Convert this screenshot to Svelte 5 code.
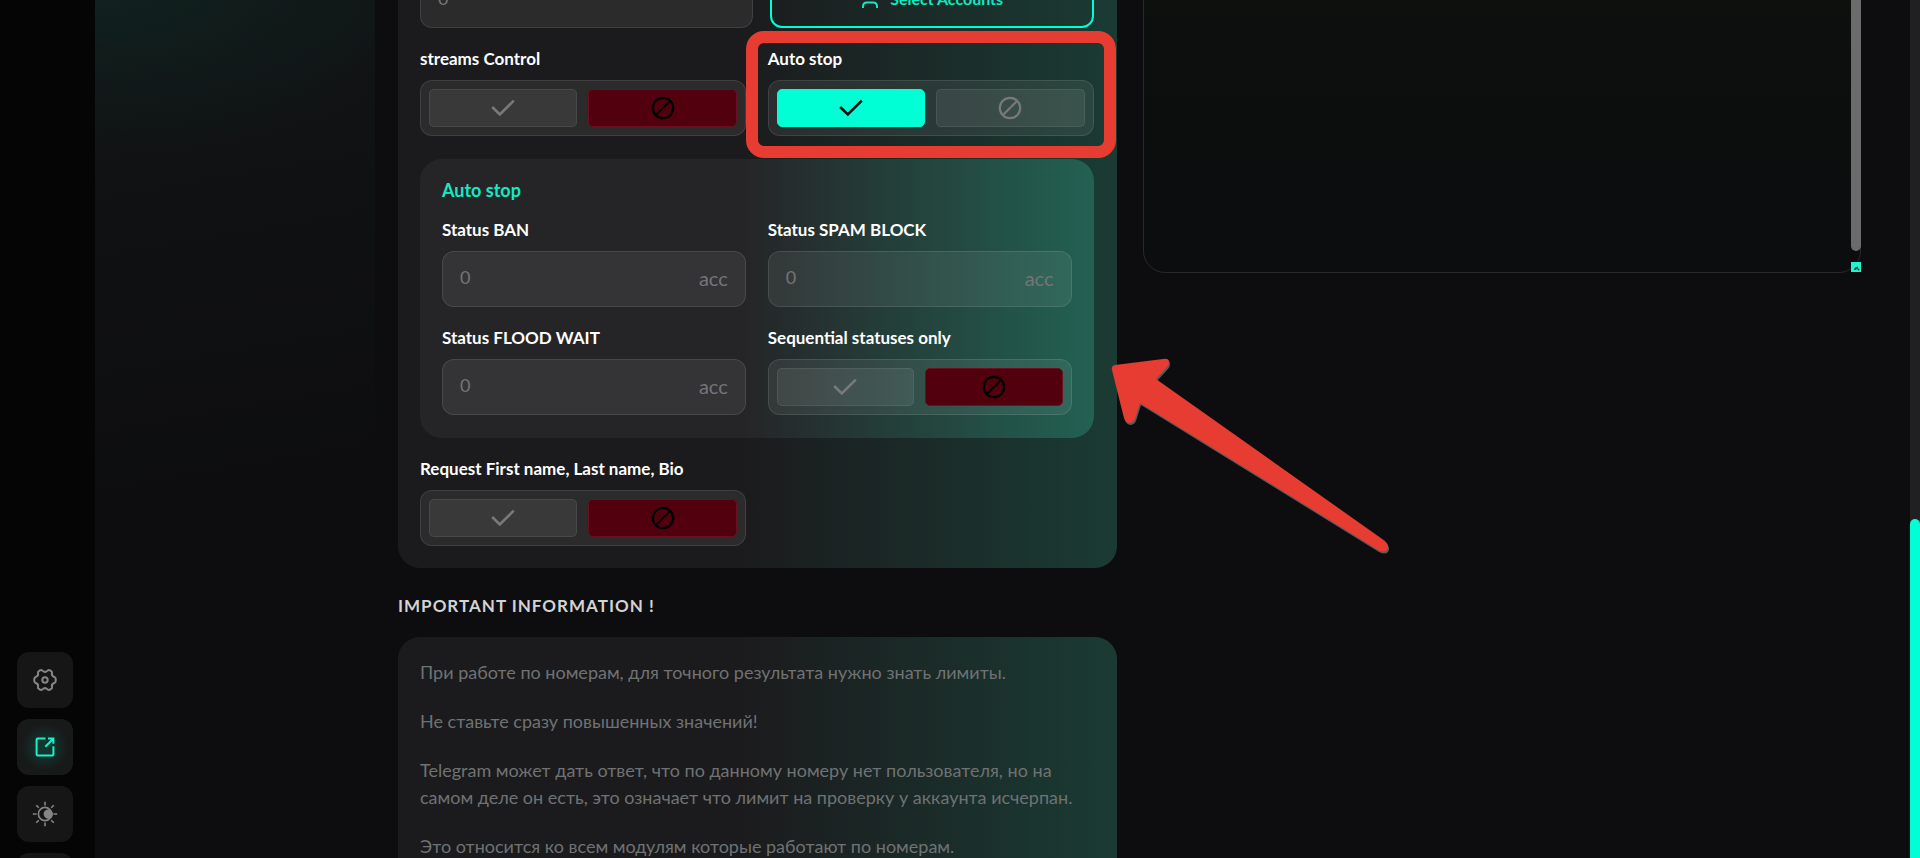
<script lang="ts">
	let streams = $state(false);
	let autoStop = $state(true);
	let sequential = $state(false);
	let requestBio = $state(false);
	let log = $state('');

	const info = [
		'При работе по номерам, для точного результата нужно знать лимиты.',
		'Не ставьте сразу повышенных значений!',
		'Telegram может дать ответ, что по данному номеру нет пользователя, но на самом деле он есть, это означает что лимит на проверку у аккаунта исчерпан.',
		'Это относится ко всем модулям которые работают по номерам.'
	];
</script>

{#snippet toggle(label: string, value: boolean, set: (v: boolean) => void)}
	<div class="toggle" role="group" aria-label={label}>
		<button
			type="button"
			class="toggle__btn"
			class:toggle__btn--on={value}
			aria-label="On"
			aria-pressed={value}
			onclick={() => set(true)}
		>
			<svg viewBox="0 0 24 24" width="24" height="24">
				<path d="M1.2 11 L8.8 18.4 L22.8 4.6" />
			</svg>
		</button>
		<button
			type="button"
			class="toggle__btn"
			class:toggle__btn--off={!value}
			aria-label="Off"
			aria-pressed={!value}
			onclick={() => set(false)}
		>
			<svg viewBox="0 0 24 24" width="24" height="24">
				<circle cx="12" cy="12" r="10.2" />
				<path d="M5.2 18.8 L18.8 5.2" />
			</svg>
		</button>
	</div>
{/snippet}

{#snippet amount(id: string, label: string)}
	<div class="field">
		<label class="field__label" for={id}>{label}</label>
		<div class="input">
			<input {id} type="text" inputmode="numeric" placeholder="0" />
			<span class="input__unit">acc</span>
		</div>
	</div>
{/snippet}

<div class="app">
	<nav class="sidebar">
		<button type="button" class="sidebar__btn" aria-label="Settings">
			<svg viewBox="0 0 24 24" width="24" height="24">
				<path
					d="M7.4 2.2 Q8.4 1.5 9.4 2.6 Q12 5.2 14.6 2.6 Q15.6 1.5 16.6 2.2 L18.4 3.3 Q19.3 3.9 19 5.1 Q18.3 7.8 20.8 8.7 Q22.7 9.4 22.7 10.7 L22.7 13.3 Q22.7 14.6 20.8 15.3 Q18.3 16.2 19 18.9 Q19.3 20.1 18.4 20.7 L16.6 21.8 Q15.6 22.5 14.6 21.4 Q12 18.8 9.4 21.4 Q8.4 22.5 7.4 21.8 L5.6 20.7 Q4.7 20.1 5 18.9 Q5.7 16.2 3.2 15.3 Q1.3 14.6 1.3 13.3 L1.3 10.7 Q1.3 9.4 3.2 8.7 Q5.7 7.8 5 5.1 Q4.7 3.9 5.6 3.3 Z"
				/>
				<circle cx="12" cy="12" r="2.7" />
			</svg>
		</button>
		<button type="button" class="sidebar__btn sidebar__btn--active" aria-label="Open">
			<svg viewBox="0 0 24 24" width="24" height="24">
				<path d="M12.5 3.6 H4.6 Q3.6 3.6 3.6 4.6 V19.4 Q3.6 20.4 4.6 20.4 H19.4 Q20.4 20.4 20.4 19.4 V11.2" />
				<path d="M12.3 11.8 L20 4 M15 3.6 H20.4 V8.8" />
			</svg>
		</button>
		<button type="button" class="sidebar__btn" aria-label="Theme">
			<svg class="sun" viewBox="0 0 26 26" width="26" height="26">
				<circle cx="13" cy="13" r="6.6" />
				<path class="solid" d="M15 8.6 A4.7 4.7 0 1 1 13.4 16.8 Q11.6 15.3 11.6 12.8 Q11.8 9.8 15 8.6 Z" />
				<path
					d="M13 0.8 V4.6 M13 21.4 V25.2 M0.8 13 H4.6 M21.4 13 H25.2 M4.2 4.2 L6.8 6.8 M19.2 19.2 L21.8 21.8 M4.2 21.8 L6.8 19.2 M19.2 6.8 L21.8 4.2"
				/>
			</svg>
		</button>
		<button type="button" class="sidebar__btn sidebar__btn--last" aria-label="More"></button>
	</nav>

	<main class="content">
		<div class="glow"></div>

		<section class="column">
			<form class="card">
				<div class="row row--accounts">
					<div class="input">
						<input type="text" inputmode="numeric" placeholder="0" aria-label="Count" />
					</div>
					<button type="button" class="select">
						<svg viewBox="0 0 20 20" width="20" height="20">
							<circle cx="10" cy="6" r="4" />
							<path d="M3 19 V17.5 Q3 13.5 7 13.5 H13 Q17 13.5 17 17.5 V19" />
						</svg>
						Select Accounts
					</button>
				</div>

				<div class="row">
					<div class="field">
						<span class="field__label">streams Control</span>
						{@render toggle('streams Control', streams, (v) => (streams = v))}
					</div>
					<div class="field field--marked">
						<span class="field__label">Auto stop</span>
						{@render toggle('Auto stop', autoStop, (v) => (autoStop = v))}
					</div>
				</div>

				<fieldset class="panel">
					<h3 class="panel__title">Auto stop</h3>
					<div class="row">
						{@render amount('ban', 'Status BAN')}
						{@render amount('spam', 'Status SPAM BLOCK')}
					</div>
					<div class="row">
						{@render amount('flood', 'Status FLOOD WAIT')}
						<div class="field">
							<span class="field__label">Sequential statuses only</span>
							{@render toggle('Sequential statuses only', sequential, (v) => (sequential = v))}
						</div>
					</div>
				</fieldset>

				<div class="row">
					<div class="field">
						<span class="field__label">Request First name, Last name, Bio</span>
						{@render toggle('Request First name, Last name, Bio', requestBio, (v) => (requestBio = v))}
					</div>
				</div>

				<!-- pointer to the auto stop panel -->
				<svg class="arrow" viewBox="0 0 290 205" width="290" height="205" aria-hidden="true">
					<path
						d="M5 12 Q4 8 8 7 L56 1 Q62 0 62 4 Q62 7 60 9 L49 21 L278 183 Q283 188 280 192 Q277 195 271 192 L33 45 L28 61 Q26 65 22 65 Q18 64 17 60 Z"
					/>
				</svg>
			</form>

			<h2 class="heading">IMPORTANT INFORMATION !</h2>

			<article class="card card--info">
				{#each info as text}
					<p>{text}</p>
				{/each}
			</article>
		</section>

		<section class="column">
			<div class="log">
				<textarea class="log__text" aria-label="Log" readonly bind:value={log}></textarea>
				<div class="log__thumb"></div>
				<svg class="log__grip" viewBox="0 0 10 10" width="10" height="10">
					<path d="M4 8 Q4 6 7 5.5 M7 8 L8 7" />
				</svg>
			</div>
		</section>
	</main>

	<div class="scrollbar">
		<div class="scrollbar__thumb"></div>
	</div>
</div>

<style>
	:global(body) {
		margin: 0;
		background: #0d0d0f;
	}

	.app {
		--accent: #00ffd5;
		--mark: #e63c31;
		--muted: #747576;
		display: flex;
		height: 100vh;
		overflow: hidden;
		color: #fff;
		font-family: Lato, 'Open Sans', sans-serif;
		font-size: 18px;
	}

	.app *,
	.app *::after {
		box-sizing: border-box;
	}

	button,
	input,
	textarea {
		font: inherit;
		color: inherit;
		margin: 0;
	}

	svg {
		display: block;
		fill: none;
		stroke: currentColor;
		stroke-width: 2;
	}

	/* sidebar */
	.sidebar {
		display: flex;
		flex-direction: column;
		justify-content: flex-end;
		align-items: center;
		gap: 11px;
		flex: 0 0 95px;
		padding-right: 5px;
		background: #050505;
	}

	.sidebar__btn {
		display: flex;
		flex: none;
		justify-content: center;
		align-items: center;
		width: 56px;
		height: 56px;
		padding: 0;
		border: 0;
		border-radius: 12px;
		background: #161616;
		color: #858585;
	}

	.sidebar__btn--active {
		background: radial-gradient(circle, #12352f 15%, #181919 60%);
		color: #1cf0c8;
	}

	.sidebar__btn--last {
		margin-bottom: -51px;
	}

	.sun {
		stroke-width: 1.6;
	}

	.solid {
		fill: currentColor;
		stroke: none;
	}

	/* content */
	.content {
		position: relative;
		display: grid;
		grid-template-columns: 1fr 1fr;
		gap: 26px;
		flex: 1;
		min-width: 0;
		padding: 0 49px 0 303px;
	}

	.glow {
		position: absolute;
		top: 0;
		bottom: 0;
		left: 0;
		width: 280px;
		background:
			radial-gradient(ellipse 360px 180px at 0 -20px, rgba(14, 44, 38, 0.6), transparent),
			linear-gradient(170deg, #121415, #0d0d0f 60%);
	}

	.column {
		min-width: 0;
	}

	.card {
		position: relative;
		display: flex;
		flex-direction: column;
		gap: 19px;
		margin-top: -50px;
		padding: 22px 23px 22px 22px;
		border-radius: 22px;
		background: linear-gradient(90deg, #1b1b1d 48%, #1a3b33);
	}

	.card--info {
		gap: 22px;
		margin-top: 0;
		color: #6f7273;
		line-height: 27px;
	}

	.card--info p {
		margin: 0;
	}

	.row {
		display: grid;
		grid-template-columns: 1fr 1fr;
		gap: 22px;
	}

	.row--accounts {
		grid-template-columns: 333fr 324fr;
		gap: 17px;
	}

	.field {
		display: flex;
		flex-direction: column;
		gap: 10px;
		min-width: 0;
	}

	.field__label {
		padding-top: 1px;
		font-size: 17px;
		font-weight: 700;
		line-height: 22px;
	}

	.field--marked {
		position: relative;
	}

	.field--marked::after {
		content: '';
		position: absolute;
		inset: -16px -22px -22px;
		border: 12px solid var(--mark);
		border-radius: 18px;
		pointer-events: none;
	}

	.input,
	.toggle {
		display: flex;
		height: 56px;
		border: 1px solid rgba(255, 255, 255, 0.1);
		border-radius: 12px;
		background: rgba(255, 255, 255, 0.07);
	}

	.input {
		align-items: center;
		padding: 0 17px;
		color: var(--muted);
	}

	.input input {
		flex: 1;
		width: 0;
		padding: 0 0 4px;
		border: 0;
		outline: none;
		background: none;
	}

	.input input::placeholder {
		color: var(--muted);
		opacity: 1;
	}

	.input__unit {
		padding-bottom: 2px;
		font-size: 20px;
	}

	.toggle {
		gap: 11px;
		padding: 8px;
	}

	.toggle__btn {
		display: flex;
		flex: 1;
		justify-content: center;
		align-items: center;
		padding: 0;
		border: 1px solid rgba(255, 255, 255, 0.08);
		border-radius: 5px;
		background: rgba(255, 255, 255, 0.07);
		color: #77797a;
	}

	.toggle__btn svg {
		stroke-width: 2.6;
	}

	.toggle__btn circle,
	.toggle__btn circle + path {
		stroke-width: 2.2;
	}

	.toggle__btn--on {
		border-color: var(--accent);
		background: var(--accent);
		color: #07110f;
	}

	.toggle__btn--off {
		border-color: #6a1020;
		background: #52000e;
		color: #000;
	}

	.select {
		display: flex;
		justify-content: center;
		align-items: center;
		gap: 10px;
		padding: 0 0 3px;
		border: 2px solid var(--accent);
		border-radius: 12px;
		background: none;
		color: #10e8c2;
		font-size: 16px;
		font-weight: 700;
	}

	.panel {
		display: flex;
		flex-direction: column;
		gap: 19px;
		min-width: 0;
		margin: 4px 0 0;
		padding: 22px 22px 23px;
		border: 0;
		border-radius: 22px;
		background: linear-gradient(90deg, #252527 48%, #226153);
	}

	.panel__title {
		margin: 0;
		color: #14e9c3;
		font-size: 18px;
		font-weight: 700;
		line-height: 18px;
	}

	.heading {
		margin: 26px 0 19px;
		color: #d3d3d3;
		font-size: 17px;
		font-weight: 700;
		line-height: 24px;
		letter-spacing: 1px;
	}

	.arrow {
		position: absolute;
		bottom: 5px;
		left: calc(100% - 10px);
		z-index: 1;
		fill: var(--mark);
		stroke: none;
		filter: drop-shadow(1px 2px 0 #5a5a5a);
		pointer-events: none;
	}

	/* log */
	.log {
		position: relative;
		height: 323px;
		margin-top: -50px;
	}

	.log__text {
		display: block;
		width: 100%;
		height: 100%;
		border: 1px solid #29292b;
		border-radius: 22px;
		outline: none;
		background: linear-gradient(#0d100d, #0c0d0f);
		resize: none;
	}

	.log__thumb {
		position: absolute;
		top: 0;
		right: 0;
		bottom: 22px;
		width: 10px;
		border-radius: 5px;
		background: #6b6b6c;
	}

	.log__grip {
		position: absolute;
		right: 0;
		bottom: 1px;
		background: #20f5cf;
		color: #064d40;
	}

	/* page scrollbar */
	.scrollbar {
		display: flex;
		align-items: flex-end;
		flex: 0 0 10px;
		background: #202022;
	}

	.scrollbar__thumb {
		width: 100%;
		height: 39.5%;
		border-radius: 5px 5px 0 0;
		background: var(--accent);
	}
</style>
